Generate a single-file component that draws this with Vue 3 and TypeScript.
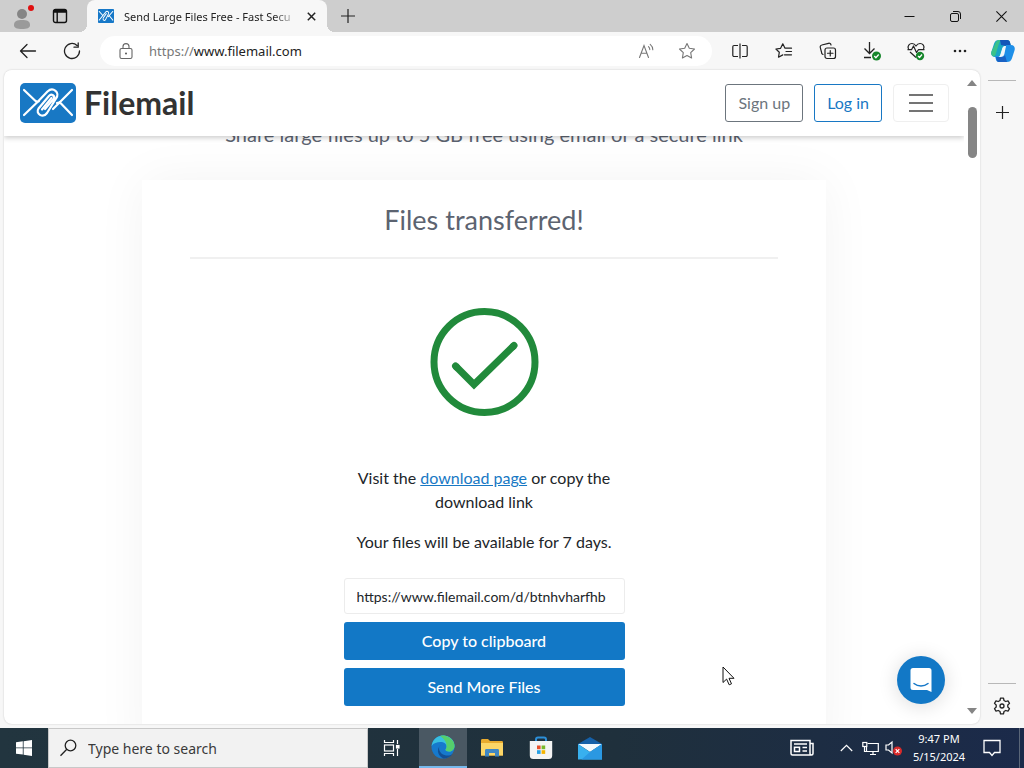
<script setup lang="ts">
import { ref } from 'vue'

const tabTitle = 'Send Large Files Free - Fast Secu'
const shareLink = ref('https://www.filemail.com/d/btnhvharfhb')
const search = ref('')
</script>

<template>
  <div class="desktop">
    <header class="titlebar">
      <button class="tool profile" aria-label="Profile">
        <svg width="24" height="28" viewBox="0 0 24 28">
          <circle cx="10" cy="12" r="5" fill="#858585" />
          <path d="M2 23c0-4 3-5 8-5s8 1 8 5c0 3-3 4-8 4s-8-1-8-4z" fill="#9a9a9a" />
          <circle cx="19" cy="6" r="3" fill="#e01010" />
        </svg>
      </button>
      <button class="tool workspace" aria-label="Tab actions">
        <svg width="16" height="16" viewBox="0 0 16 16" fill="none" stroke="#111" stroke-width="1.4">
          <rect x="1.5" y="1.5" width="13" height="13" rx="2" />
          <path d="M1.5 3.6h13M2 2.4h12" stroke-width="2.2" />
          <path d="M5.2 4v10" />
        </svg>
      </button>
      <div class="tab">
        <svg class="favicon" width="16" height="14" viewBox="0 0 56 40" preserveAspectRatio="none">
          <rect width="56" height="40" rx="3" fill="#1678c8" />
          <g fill="none" stroke="#fff" stroke-width="3" stroke-linecap="round">
            <path d="M4 7l11 10M40 19.500l12 12.500M4 32L27.500 8.500c5-5 13 1 8.500 7L26.500 30c-3.500 5.500-11.500 1-8-4.500L29 13M52 7L36 22" />
          </g>
        </svg>
        <span class="tab-title">{{ tabTitle }}</span>
        <button class="tab-close" aria-label="Close tab">
          <svg width="9" height="9" viewBox="0 0 9 9" stroke="#222" stroke-width="1.5"><path d="M.8.8l7.4 7.4M8.2.8L.8 8.2" /></svg>
        </button>
      </div>
      <button class="tool new-tab" aria-label="New tab">
        <svg width="14" height="14" viewBox="0 0 14 14" stroke="#222" stroke-width="1.2"><path d="M7 0v14M0 7h14" /></svg>
      </button>
      <div class="window-buttons">
        <button class="tool" aria-label="Minimize">
          <svg width="11" height="11" viewBox="0 0 11 11" stroke="#111"><path d="M.5 5.5h10" /></svg>
        </button>
        <button class="tool" aria-label="Restore">
          <svg width="11" height="11" viewBox="0 0 11 11" fill="none" stroke="#111">
            <rect x=".5" y="2.5" width="8" height="8" rx="1.5" />
            <path d="M3 .5h5a2.5 2.5 0 0 1 2.5 2.5v5" />
          </svg>
        </button>
        <button class="tool" aria-label="Close">
          <svg width="11" height="11" viewBox="0 0 11 11" stroke="#111" stroke-width="1.1"><path d="M.4.4l10.2 10.2M10.6.4L.4 10.6" /></svg>
        </button>
      </div>
    </header>

    <nav class="toolbar" aria-label="Browser toolbar">
      <button class="tool" aria-label="Back">
        <svg width="18" height="16" viewBox="0 0 18 16" fill="none" stroke="#222" stroke-width="1.3" stroke-linecap="round" stroke-linejoin="round"><path d="M8 1.5L1.5 8 8 14.5M1.5 8H16.5" /></svg>
      </button>
      <button class="tool" aria-label="Refresh">
        <svg width="18" height="18" viewBox="0 0 18 18" fill="none" stroke="#222" stroke-width="1.3" stroke-linecap="round"><path d="M16.5 9A7.5 7.5 0 1 1 14 3.4M15.2 1v4.2H11" /></svg>
      </button>
      <div class="address">
        <svg width="14" height="17" viewBox="0 0 14 17" fill="none" stroke="#666" stroke-width="1.1">
          <rect x="1" y="5.5" width="12" height="10" rx="1.6" />
          <path d="M4 5.5V3.6a3 3 0 0 1 6 0v1.9" />
          <circle cx="7" cy="10.5" r="1" fill="#555" stroke="none" />
        </svg>
        <span class="url"><span class="scheme">https://</span>www.filemail.com</span>
        <button class="tool small" aria-label="Read aloud">
          <svg width="18" height="16" viewBox="0 0 18 16" fill="none" stroke="#777" stroke-width="1.1" stroke-linecap="round">
            <path d="M1.5 14.5L6 2.5l4.5 12M3.2 10.2h5.6M10.5 3.6a4 4 0 0 1 1.3 3M12.2 1.4a7 7 0 0 1 2.6 5.4" />
          </svg>
        </button>
        <button class="tool small" aria-label="Add to favourites">
          <svg width="18" height="18" viewBox="0 0 18 18" fill="none" stroke="#777" stroke-width="1.1" stroke-linejoin="round"><path d="M9 1.500l2.300 4.800 5.200.7-3.800 3.700.9 5.300L9 13.500 4.400 16l.9-5.300L1.500 7l5.200-.7z" /></svg>
        </button>
      </div>
      <div class="actions">
        <button class="tool" aria-label="Split screen">
          <svg width="16" height="16" viewBox="0 0 16 16" fill="none" stroke="#222" stroke-width="1.2"><path d="M6 2.500H2A1.200 1.200 0 0 0 .8 3.700v8.600A1.200 1.200 0 0 0 2 13.500h4M10 2.500h4a1.200 1.200 0 0 1 1.200 1.200v8.600a1.200 1.200 0 0 1-1.200 1.200h-4M8 .5v15" /></svg>
        </button>
        <button class="tool" aria-label="Favourites">
          <svg width="18" height="18" viewBox="0 0 18 18" fill="none" stroke="#222" stroke-width="1.2" stroke-linejoin="round" stroke-linecap="round"><path d="M16.500 6.200H10L7.800 1.800 5.600 6.300.9 7l3.400 3.300-.8 4.900 4.300-2.300M11 9.500h5.500M9.500 12.800h7" /></svg>
        </button>
        <button class="tool" aria-label="Collections">
          <svg width="18" height="18" viewBox="0 0 18 18" fill="none" stroke="#222" stroke-width="1.2" stroke-linecap="round">
            <rect x="6" y="6" width="10.500" height="10.500" rx="2" />
            <path d="M11.250 8.500v5.500M8.500 11.250H14M4 12.500A2.500 2.500 0 0 1 2.500 10L1.300 5.600A2 2 0 0 1 2.800 3L9.500 1.300A2 2 0 0 1 12 3" />
          </svg>
        </button>
        <button class="tool" aria-label="Downloads">
          <svg width="20" height="20" viewBox="0 0 20 20" fill="none" stroke="#222" stroke-width="1.300">
            <path d="M7.500 1v11M2.500 7.500l5 5 5-5M2 16.500h7" />
            <circle cx="14.500" cy="15" r="4.500" fill="#16862b" stroke="none" />
            <path d="M12.300 15l1.600 1.700 2.800-3.200" stroke="#fff" />
          </svg>
        </button>
        <button class="tool" aria-label="Browser essentials">
          <svg width="20" height="20" viewBox="0 0 20 20" fill="none" stroke="#222" stroke-width="1.200" stroke-linejoin="round">
            <path d="M2.500 8C1 5 3.500 2.500 6 2.500c2 0 3.200 1.200 4 2.500.8-1.300 2-2.500 4-2.500 2.800 0 5 2.700 3.500 5.500M1.500 8.700h4L7.500 5l3 6.500 2-2.800h6M4 11l6 5.500" />
            <circle cx="14" cy="15" r="4.200" fill="#16862b" stroke="none" />
            <path d="M12 15l1.500 1.500 2.500-3" stroke="#fff" />
          </svg>
        </button>
        <button class="tool" aria-label="Settings and more">
          <svg width="16" height="4" viewBox="0 0 16 4" fill="#222"><circle cx="3" cy="2" r="1.300" /><circle cx="8" cy="2" r="1.300" /><circle cx="13" cy="2" r="1.300" /></svg>
        </button>
        <button class="tool copilot" aria-label="Copilot">
          <svg width="24" height="24" viewBox="0 0 24 24">
            <path d="M8 1h8c2 0 2.600 1 3.100 2.700L20 7h-5c-2 0-3 1-3.500 2.700L9 18H4c-3 0-4.500-2.500-3.500-5.500l2.600-8C3.900 2 5.500 1 8 1z" fill="#19a6c4" />
            <path d="M4 5.500C5 2.500 6 1 8.500 1H11c-2 .8-2.800 2.500-3.500 5L4.800 15c-.5 2-1.800 3-3.800 1.500-1-1.500-.9-2.800-.5-4z" fill="#3bc28a" />
            <path d="M9 1h7c2 0 2.600 1 3.100 2.700L20 7h-5l-5-1z" fill="#1456b8" />
            <path d="M16 23H8c-2 0-2.600-1-3.100-2.700L4 17h5c2 0 3-1 3.500-2.700L15 6h5c3 0 4.500 2.500 3.500 5.500l-2.600 8C20.100 22 18.500 23 16 23z" fill="#1e8fe8" />
            <path d="M5 18h6c1.500 0 2.500-.8 3-2l2 7H8c-2 0-2.500-1.500-3-5z" fill="#1a62c4" />
            <path d="M15 7h-1c-1.500 0-2.300 1-2.800 2.500L9.500 15c-.4 1.500-1 2.500-2 3H9.500c2 0 3.200-.8 3.900-3z" fill="#f2f7fa" />
          </svg>
        </button>
      </div>
    </nav>

    <div class="workarea">
      <div class="viewport">
        <div class="site">
          <header class="site-header">
            <a class="brand" href="#home">
              <svg width="56" height="40" viewBox="0 0 56 40" aria-hidden="true">
                <rect width="56" height="40" rx="5" fill="#1878c4" />
                <g fill="none" stroke="#fff" stroke-width="2.200" stroke-linecap="round" stroke-linejoin="round">
                  <path d="M4 7l11 10.500q2 2 4 .500M4 32l13-12.500L27.500 8.500c5.500-5 13 1 8.500 7L27 30c-4 5.500-12 1-8.500-4.500L29 13c2.500-3 6.500 0 4.500 3L25 26" />
                  <path d="M52 7L39.500 19.500 33 26M52 32L41 20.500q-1.500-1.500-4-.5M22 26.500L31.500 15" />
                </g>
              </svg>
              <span class="brand-name">Filemail</span>
            </a>
            <div class="site-actions">
              <button class="outline">Sign up</button>
              <button class="outline primary">Log in</button>
              <button class="burger" aria-label="Menu">
                <svg width="24" height="20" viewBox="0 0 24 20" stroke="#747474" stroke-width="2"><path d="M0 2h24M0 10h24M0 18h24" /></svg>
              </button>
            </div>
          </header>
          <main class="site-main">
            <p class="tagline">Share large files up to 5 GB free using email or a secure link</p>
            <section class="card">
              <h1>Files transferred!</h1>
              <hr />
              <svg class="done" width="110" height="110" viewBox="0 0 110 110" fill="none" stroke="#218a3b" aria-hidden="true">
                <circle cx="55.500" cy="55" r="50.500" stroke-width="7" />
                <path d="M26.500 59L45 77.500 85 38.500" stroke-width="7" />
                <path d="M26.500 59l1 1M85 38.500l-1 1" stroke-width="7" stroke-linecap="round" />
              </svg>
              <div class="column">
                <p>Visit the <a href="#download">download page</a> or copy the download link</p>
                <p>Your files will be available for 7 days.</p>
                <input v-model="shareLink" class="link" type="text" aria-label="Download link" readonly />
                <button class="solid">Copy to clipboard</button>
                <button class="solid">Send More Files</button>
              </div>
            </section>
          </main>
        </div>
        <div class="scrollbar" aria-hidden="true">
          <svg width="10" height="6" viewBox="0 0 10 6"><path d="M5 0l5 6H0z" fill="#858585" /></svg>
          <div class="track"><div class="thumb"></div></div>
          <svg width="10" height="6" viewBox="0 0 10 6"><path d="M5 6L0 0h10z" fill="#858585" /></svg>
        </div>
        <button class="chat" aria-label="Open chat">
          <svg width="24" height="26" viewBox="0 0 24 26">
            <path d="M4 1h16a2.500 2.500 0 0 1 2.500 2.500V25l-4.500-2H4a2.500 2.500 0 0 1-2.500-2.500v-17A2.500 2.500 0 0 1 4 1z" fill="#fff" />
            <path d="M5 16.500c4 3.300 10 3.300 14 0" fill="none" stroke="#1678c8" stroke-width="1.500" stroke-linecap="round" />
          </svg>
        </button>
        <svg class="pointer" width="13" height="20" viewBox="0 0 13 20" aria-hidden="true"><path d="M1 1v15.500l3.600-3.400 2.600 5.700 2.300-1-2.500-5.500H12z" fill="#fff" stroke="#111" /></svg>
      </div>
      <aside class="sidebar">
        <button class="tool" aria-label="Add to sidebar">
          <svg width="13" height="13" viewBox="0 0 13 13" stroke="#222" stroke-width="1.200"><path d="M6.500 0v13M0 6.500h13" /></svg>
        </button>
        <button class="tool" aria-label="Sidebar settings">
          <svg width="18" height="18" viewBox="0 0 18 18" fill="none" stroke="#222" stroke-width="1.300" stroke-linejoin="round">
            <path d="M7.500 1.200h3l.5 2.300 1.700 1 2.300-.7 1.500 2.600L14.800 8v2l1.700 1.600-1.500 2.600-2.300-.7-1.700 1-.5 2.300h-3L7 14.500l-1.700-1-2.300.7-1.500-2.600L3.200 10V8L1.500 6.400 3 3.800l2.300.7 1.700-1z" />
            <circle cx="9" cy="9" r="2" />
          </svg>
        </button>
      </aside>
    </div>

    <footer class="taskbar">
      <button class="task" aria-label="Start">
        <svg width="16" height="16" viewBox="0 0 16 16" fill="#fff"><path d="M0 2.300L6.800 1.300v6.200H0zM7.600 1.200L16 0v7.500H7.600zM0 8.300h6.800v6.300L0 13.700zM7.600 8.300H16V16l-8.400-1.200z" /></svg>
      </button>
      <label class="search">
        <svg width="18" height="18" viewBox="0 0 18 18" fill="none" stroke="#222" stroke-width="1.300"><circle cx="10.500" cy="6.500" r="5.300" /><path d="M6.800 10.300L.5 16.800" /></svg>
        <input v-model="search" type="text" placeholder="Type here to search" aria-label="Search" />
      </label>
      <button class="task view" aria-label="Task view">
        <svg width="18" height="16" viewBox="0 0 18 16" fill="none" stroke="#fff" stroke-width="1.200"><path d="M1.500 0v2.500h9V0M1.500 16v-2.500h9V16M14.500 0v4M14.500 9v7" /><rect x="1.500" y="5" width="9" height="6" /><rect x="13.500" y="5.500" width="2.500" height="2.500" fill="#fff" /></svg>
      </button>
      <div class="apps">
        <button class="task active" aria-label="Microsoft Edge">
          <svg width="24" height="24" viewBox="0 0 24 24">
            <circle cx="12" cy="12" r="11.500" fill="#1679cd" />
            <path d="M.6 11C1.500 4.500 6.500.5 12.200.5 18.500.5 23.500 5 23.500 11c0 3.500-2.600 5.500-5.500 5.500-2.300 0-3.700-.8-3.400-2 .4-1 1-1.500 1-3C15.600 9 13 7 9.500 7 6 7 2.500 8 .6 11z" fill="#38bfe0" />
            <path d="M9 1c2-.6 4-.6 6 0 5 1.500 8.500 5.500 8.500 10 0 3.500-2.600 5.500-5.500 5.500-2.300 0-3.700-.8-3.400-2 .4-1 1-1.500 1-3C15.600 6 12 3 9 1z" fill="#55cf6c" />
            <path d="M8 13c0 5 4.500 7.500 8.500 7.500 2 0 3.500-.5 5-1.500-2 3-5.500 4.600-9 4.500C9 22 6.500 18.500 7 15c.3-3 2-4.500 4-5-2 .3-3 1.500-3 3z" fill="#124f94" />
          </svg>
        </button>
        <button class="task" aria-label="File Explorer">
          <svg width="22" height="18" viewBox="0 0 22 18">
            <path d="M0 1.500C0 .7.500 0 1.300 0H7l2 2h11.500c.8 0 1.500.5 1.500 1.300V16.500H0z" fill="#e9ab2e" />
            <path d="M0 4h22v12.500H0z" fill="#fcd667" />
            <path d="M4 17.500v-6c0-1 .6-1.500 1.500-1.500h11c1 0 1.500.5 1.500 1.500v6h-4V14H8v3.500z" fill="#3f87c4" />
          </svg>
        </button>
        <button class="task" aria-label="Microsoft Store">
          <svg width="24" height="24" viewBox="0 0 24 24">
            <path d="M7 6V3.500C7 2.300 7.800 1.500 9 1.500h6c1.200 0 2 .8 2 2V6" fill="none" stroke="#2c8fd8" stroke-width="2" />
            <path d="M.8 5h22.400v14.500A3.500 3.500 0 0 1 19.700 23H4.300A3.500 3.500 0 0 1 .8 19.500z" fill="#f4f4f4" />
            <path d="M8 9.500h3.600v3.700H8z" fill="#e8502a" /><path d="M12.600 9.500h3.600v3.700h-3.600z" fill="#78b82a" />
            <path d="M8 14.200h3.600v3.700H8z" fill="#28a0e4" /><path d="M12.600 14.200h3.600v3.700h-3.600z" fill="#f5b400" />
          </svg>
        </button>
        <button class="task" aria-label="Mail">
          <svg width="24" height="23" viewBox="0 0 24 23">
            <path d="M0 7L12 0l12 7v3H0z" fill="#1560a8" />
            <path d="M0 7h24L12 15z" fill="#f3f9fd" />
            <path d="M0 7l12 8 12-8v15.500H0z" fill="#38b0ee" />
            <path d="M24 7v15.500H3.500L12 15z" fill="#2a98e2" />
          </svg>
        </button>
      </div>
      <div class="tray">
        <button class="task news" aria-label="News">
          <svg width="24" height="18" viewBox="0 0 24 18" fill="none" stroke="#fff" stroke-width="1.500">
            <path d="M20 16H2.500A1.500 1.500 0 0 1 1 14.500V1.500h19v13A1.500 1.500 0 0 0 23 14.500V4.500h-3M4 5h13M12.500 8.500H17M12.500 12H17" /><rect x="4.500" y="8.300" width="5" height="4.200" />
          </svg>
        </button>
        <button class="task mini" aria-label="Show hidden icons">
          <svg width="13" height="8" viewBox="0 0 13 8" fill="none" stroke="#fff" stroke-width="1.200"><path d="M.8 7l5.700-5.700L12.200 7" /></svg>
        </button>
        <button class="task mini" aria-label="Network">
          <svg width="17" height="15" viewBox="0 0 17 15" fill="none" stroke="#fff" stroke-width="1.200"><path d="M5.500 2.500h10.800v8H4.500V6M8 13.500h6M11 10.500v3M2.500 6v4.500H4" /><rect x=".8" y="1.500" width="4" height="4" /></svg>
        </button>
        <button class="task mini" aria-label="Sound muted">
          <svg width="18" height="16" viewBox="0 0 18 16" fill="none" stroke="#fff" stroke-width="1.200"><path d="M1 5h2.500l3.500-3v11L3.500 10H1z" /><circle cx="12.500" cy="11" r="4.500" fill="#d92a2a" stroke="none" /><path d="M10.700 9.200l3.600 3.600M14.300 9.200l-3.600 3.600" /></svg>
        </button>
        <div class="clock"><span>9:47 PM</span><span>5/15/2024</span></div>
        <button class="task notify" aria-label="Notifications">
          <svg width="18" height="18" viewBox="0 0 18 18" fill="none" stroke="#fff" stroke-width="1.300"><path d="M1 1.500h16v12h-5.500L9 16.500l-2.500-3H1z" /></svg>
        </button>
        <div class="peek"></div>
      </div>
    </footer>
  </div>
</template>

<style>
html,
body {
  overflow: hidden;
}
</style>

<style scoped>
* {
  box-sizing: border-box;
}
.desktop {
  display: flex;
  flex-direction: column;
  height: 100vh;
  background: #f7f7f7;
  color: #222;
  font: 12px 'Noto Sans', 'Open Sans', sans-serif;
}
button,
input {
  margin: 0;
  padding: 0;
  border: 0;
  background: none;
  color: inherit;
  font: inherit;
}
svg {
  display: block;
  flex: none;
}
.tool,
.task {
  display: flex;
  flex: none;
  align-items: center;
  justify-content: center;
  width: 44px;
  height: 32px;
}

/* Title bar */
.titlebar {
  display: flex;
  flex: none;
  height: 32px;
  background: #cecece;
}
.profile {
  width: 48px;
}
.workspace {
  width: 24px;
}
.tab {
  position: relative;
  display: flex;
  align-items: center;
  width: 240px;
  margin-left: 15px;
  padding: 0 11px;
  border-radius: 8px 8px 0 0;
  background: #f7f7f7;
}
.tab::before,
.tab::after {
  content: '';
  position: absolute;
  bottom: 0;
  width: 8px;
  height: 8px;
}
.tab::before {
  left: -8px;
  background: radial-gradient(circle at 0 0, transparent 8px, #f7f7f7 8px);
}
.tab::after {
  right: -8px;
  background: radial-gradient(circle at 100% 0, transparent 8px, #f7f7f7 8px);
}
.tab-title {
  flex: 1;
  min-width: 0;
  margin-left: 10px;
  overflow: hidden;
  white-space: nowrap;
  font-size: 11px;
  mask-image: linear-gradient(90deg, #000 86%, transparent);
}
.tab-close {
  display: flex;
  margin-left: 9px;
}
.new-tab {
  width: 42px;
}
.window-buttons {
  display: flex;
  margin-left: auto;
}
.window-buttons .tool {
  width: 46px;
}

/* Toolbar */
.toolbar {
  display: flex;
  flex: none;
  align-items: center;
  height: 38px;
  padding-left: 6px;
}
.address {
  display: flex;
  flex: 1;
  align-items: center;
  height: 30px;
  margin: 0 6px;
  padding: 0 5px 0 19px;
  border-radius: 15px;
  background: #fff;
}
.url {
  flex: 1;
  margin-left: 16px;
  font-size: 13px;
}
.scheme {
  color: #777;
}
.small {
  width: 40px;
}
.actions {
  display: flex;
}
.copilot {
  width: 42px;
}

/* Page frame */
.workarea {
  display: flex;
  flex: 1;
  min-height: 0;
  padding: 0 0 4px 4px;
}
.viewport {
  position: relative;
  display: flex;
  flex: 1;
  min-width: 0;
  overflow: hidden;
  border-radius: 8px;
  background: #fff;
  box-shadow: 0 0 2px rgba(0, 0, 0, 0.2);
}
.site {
  flex: 1;
  min-width: 0;
  overflow: hidden;
  color: #212529;
  font: 16px/24px Lato, sans-serif;
}
.site-header {
  position: relative;
  z-index: 1;
  display: flex;
  align-items: center;
  justify-content: space-between;
  height: 66px;
  padding: 0 15px 0 16px;
  background: #fff;
  box-shadow: 0 2px 5px rgba(0, 0, 0, 0.2);
}
.brand {
  display: flex;
  align-items: center;
  gap: 8px;
  color: #333;
  text-decoration: none;
}
.brand-name {
  font-size: 32px;
  font-weight: 700;
  line-height: 40px;
}
.site-actions {
  display: flex;
  gap: 11px;
}
.outline {
  height: 38px;
  padding: 0 12px;
  border: 1px solid #6c757d;
  border-radius: 3px;
  color: #6c757d;
}
.outline.primary {
  border-color: #1878c4;
  color: #1878c4;
}
.burger {
  display: flex;
  align-items: center;
  justify-content: center;
  width: 56px;
  height: 38px;
  border: 1px solid #efefef;
  border-radius: 4px;
}
.site-main {
  padding: 0 16px;
}
.tagline {
  margin: -14px 0 34px;
  color: #5c6370;
  font-size: 20px;
  text-align: center;
}
.card {
  display: flex;
  flex-direction: column;
  align-items: center;
  max-width: 684px;
  margin: 0 auto;
  padding: 23px 48px 48px;
  background: #fff;
  box-shadow: 0 0 48px rgba(0, 0, 0, 0.05);
}
h1 {
  margin: 0;
  color: #5c6370;
  font-size: 27px;
  font-weight: 400;
  line-height: 34px;
}
hr {
  width: 100%;
  height: 2px;
  margin: 20px 0 48px;
  border: 0;
  background: #f0f0f0;
}
.done {
  margin-bottom: 49px;
}
.column {
  display: flex;
  flex-direction: column;
  width: 281px;
}
.column p {
  margin: 0 0 16px;
  text-align: center;
}
.column a {
  color: #1878c4;
}
.link {
  width: 100%;
  height: 36px;
  margin: 8px 0;
  padding: 0 12px;
  border: 1px solid #ececec;
  border-radius: 3px;
  font-size: 14px;
}
.solid {
  height: 38px;
  margin-bottom: 8px;
  border-radius: 3px;
  background: #1278c6;
  color: #fff;
  font-weight: 500;
}
.scrollbar {
  display: flex;
  flex-direction: column;
  align-items: center;
  width: 16px;
  padding: 10px 0;
}
.track {
  flex: 1;
  padding-top: 21px;
}
.thumb {
  width: 9px;
  height: 51px;
  border-radius: 5px;
  background: #858585;
}
.chat {
  position: absolute;
  right: 35px;
  bottom: 20px;
  display: flex;
  align-items: center;
  justify-content: center;
  width: 48px;
  height: 48px;
  border-radius: 50%;
  background: #1278c6;
  box-shadow: 0 2px 20px rgba(0, 0, 0, 0.14);
}
.pointer {
  position: absolute;
  right: 245px;
  bottom: 38px;
}
.sidebar {
  display: flex;
  flex: none;
  flex-direction: column;
  justify-content: space-between;
  width: 44px;
  padding: 10px 8px 0;
}
.sidebar .tool {
  width: 28px;
  height: 41px;
  padding-top: 4px;
  border-top: 1px solid #b8b8b8;
}
.sidebar .tool:first-child {
  height: 60px;
}

/* Taskbar */
.taskbar {
  display: flex;
  flex: none;
  height: 40px;
  background: linear-gradient(90deg, #22353f, #1f303c 60%, #1b2a4a);
  color: #fff;
}
.task {
  width: 48px;
  height: 40px;
}
.search {
  display: flex;
  align-items: center;
  width: 320px;
  padding: 0 11px;
  border: 1px solid #c8c8c8;
  background: #f2f2f2;
}
.search input {
  flex: 1;
  min-width: 0;
  margin-left: 10px;
  color: #222;
  font-size: 14px;
}
.search input::placeholder {
  color: #3a3a3a;
  opacity: 1;
}
.view {
  margin-right: 3px;
}
.apps {
  display: flex;
  gap: 1px;
}
.active {
  border-bottom: 2px solid #76b9ed;
  background: #4a5863;
}
.tray {
  display: flex;
  align-items: center;
  margin-left: auto;
}
.news {
  width: 64px;
}
.mini {
  width: 24px;
}
.clock {
  display: flex;
  flex-direction: column;
  align-items: center;
  width: 66px;
  font-size: 11px;
  line-height: 18px;
}
.notify {
  width: 40px;
}
.peek {
  width: 5px;
  height: 40px;
  margin-left: 7px;
  border-left: 1px solid #5a6678;
}
</style>
